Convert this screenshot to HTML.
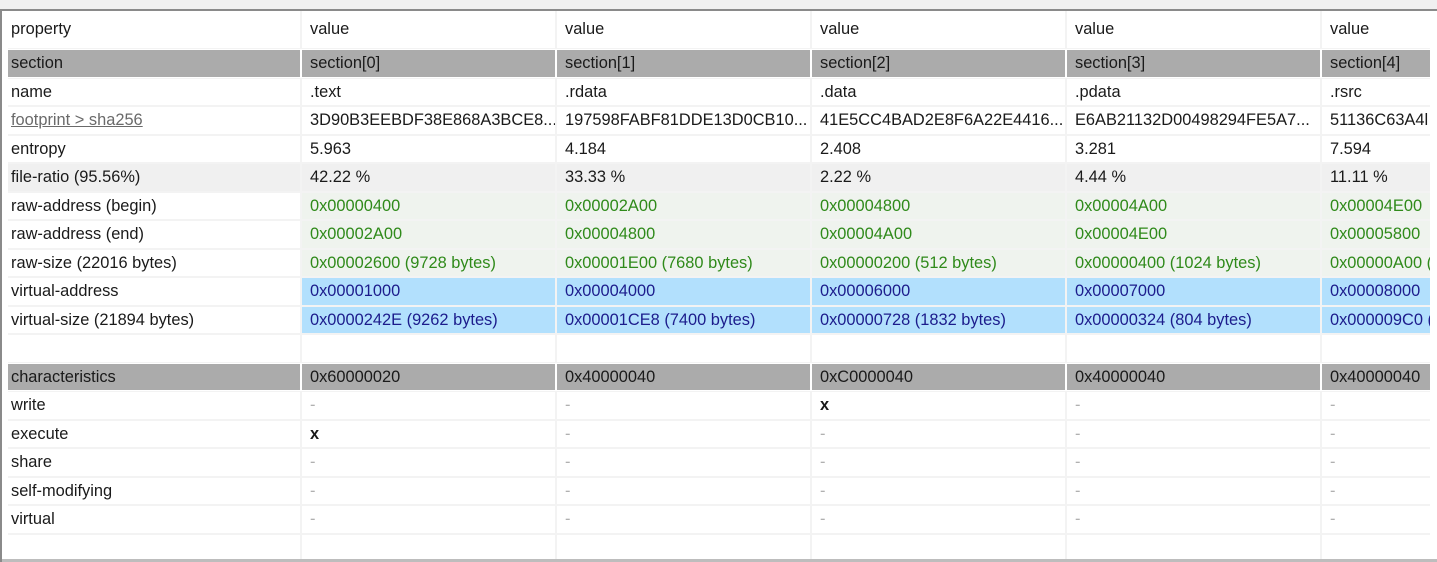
<!DOCTYPE html>
<html><head><meta charset="utf-8"><style>
html,body{margin:0;padding:0;width:1437px;height:562px;overflow:hidden;background:#fff;font-family:"Liberation Sans",sans-serif;font-size:16.4px;color:#1a1a1a}
.top{position:absolute;left:0;top:0;width:1437px;height:9px;background:#f0f0f0;border-bottom:2px solid #8a8a8a}
.lb{position:absolute;left:0;top:9px;width:2px;height:553px;background:#8a8a8a}
.bot{position:absolute;left:2px;top:559px;width:1435px;height:3px;background:#bdbdbd}
.wrap{position:absolute;left:8px;top:11px;width:1422px;height:548px;overflow:hidden}
table{border-collapse:separate;border-spacing:2px 2px;table-layout:fixed;width:1560px;margin-left:-2px;margin-top:-2px}
td{height:26.5px;padding:0 0 0 8px;white-space:nowrap;overflow:hidden;box-shadow:0 0 0 1px #f3f3f3;line-height:26px}
td:first-child{padding-left:3px}
tr.h td{height:37px;line-height:37px}
tr.g td{background:#ababab;box-shadow:none}
tr.f td{background:#f0f0f0}
tr.r td{color:#2f8a1a}
tr.r td:not(:first-child){background:#eff3ee}
tr.v td:not(:first-child){background:#b2e0fd;color:#1c1c8c}
tr.r td:first-child,tr.v td:first-child{color:#1a1a1a}
.u{color:#6a6a6a;text-decoration:underline}
.d{color:#b0b0b0}
b{font-weight:bold}
</style></head><body>
<div class="top"></div><div class="lb"></div>
<div class="wrap"><table>
<colgroup><col style="width:292px"><col style="width:253px"><col style="width:253px"><col style="width:253px"><col style="width:253px"><col style="width:253px"></colgroup>
<tr class="h"><td>property</td><td>value</td><td>value</td><td>value</td><td>value</td><td>value</td></tr>
<tr class="g"><td>section</td><td>section[0]</td><td>section[1]</td><td>section[2]</td><td>section[3]</td><td>section[4]</td></tr>
<tr><td>name</td><td>.text</td><td>.rdata</td><td>.data</td><td>.pdata</td><td>.rsrc</td></tr>
<tr><td><span class="u">footprint &gt; sha256</span></td><td>3D90B3EEBDF38E868A3BCE8...</td><td>197598FABF81DDE13D0CB10...</td><td>41E5CC4BAD2E8F6A22E4416...</td><td>E6AB21132D00498294FE5A7...</td><td>51136C63A4l</td></tr>
<tr><td>entropy</td><td>5.963</td><td>4.184</td><td>2.408</td><td>3.281</td><td>7.594</td></tr>
<tr class="f"><td>file-ratio (95.56%)</td><td>42.22 %</td><td>33.33 %</td><td>2.22 %</td><td>4.44 %</td><td>11.11 %</td></tr>
<tr class="r"><td>raw-address (begin)</td><td>0x00000400</td><td>0x00002A00</td><td>0x00004800</td><td>0x00004A00</td><td>0x00004E00</td></tr>
<tr class="r"><td>raw-address (end)</td><td>0x00002A00</td><td>0x00004800</td><td>0x00004A00</td><td>0x00004E00</td><td>0x00005800</td></tr>
<tr class="r"><td>raw-size (22016 bytes)</td><td>0x00002600 (9728 bytes)</td><td>0x00001E00 (7680 bytes)</td><td>0x00000200 (512 bytes)</td><td>0x00000400 (1024 bytes)</td><td>0x00000A00 (2560 bytes)</td></tr>
<tr class="v"><td>virtual-address</td><td>0x00001000</td><td>0x00004000</td><td>0x00006000</td><td>0x00007000</td><td>0x00008000</td></tr>
<tr class="v"><td>virtual-size (21894 bytes)</td><td>0x0000242E (9262 bytes)</td><td>0x00001CE8 (7400 bytes)</td><td>0x00000728 (1832 bytes)</td><td>0x00000324 (804 bytes)</td><td>0x000009C0 (2496 bytes)</td></tr>
<tr><td></td><td></td><td></td><td></td><td></td><td></td></tr>
<tr class="g"><td>characteristics</td><td>0x60000020</td><td>0x40000040</td><td>0xC0000040</td><td>0x40000040</td><td>0x40000040</td></tr>
<tr><td>write</td><td class="d">-</td><td class="d">-</td><td><b>x</b></td><td class="d">-</td><td class="d">-</td></tr>
<tr><td>execute</td><td><b>x</b></td><td class="d">-</td><td class="d">-</td><td class="d">-</td><td class="d">-</td></tr>
<tr><td>share</td><td class="d">-</td><td class="d">-</td><td class="d">-</td><td class="d">-</td><td class="d">-</td></tr>
<tr><td>self-modifying</td><td class="d">-</td><td class="d">-</td><td class="d">-</td><td class="d">-</td><td class="d">-</td></tr>
<tr><td>virtual</td><td class="d">-</td><td class="d">-</td><td class="d">-</td><td class="d">-</td><td class="d">-</td></tr>
<tr><td></td><td></td><td></td><td></td><td></td><td></td></tr>
</table></div>
<div class="bot"></div>
</body></html>
